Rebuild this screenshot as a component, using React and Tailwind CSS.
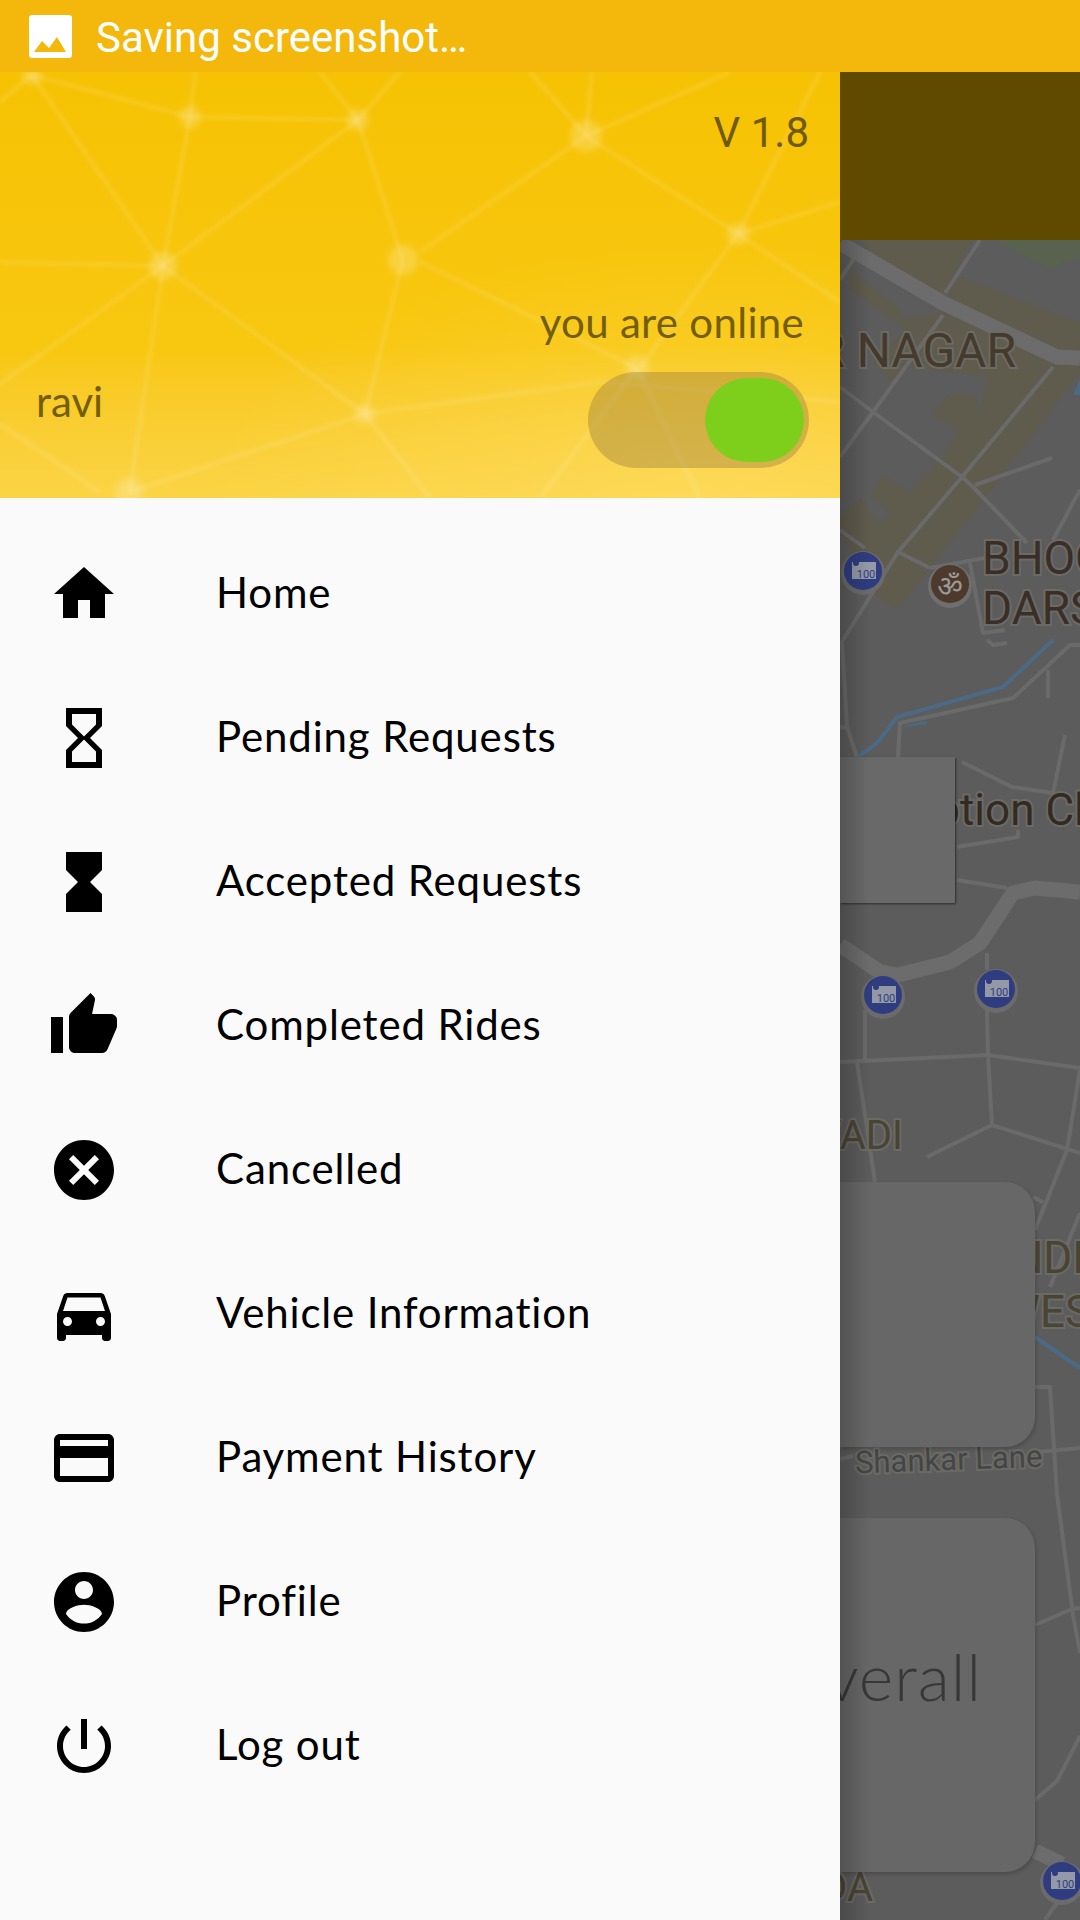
import React from "react";

const menuItems = [
  { label: "Home", d: "M10 20v-6h4v6h5v-8h3L12 3 2 12h3v8z" },
  { label: "Pending Requests", d: "M6 2v6h.01L6 8.01 10 12l-4 4 .01.01H6V22h12v-5.99h-.01L18 16l-4-4 4-3.99-.01-.01H18V2H6zm10 14.5V20H8v-3.5l4-4 4 4zm-4-5l-4-4V4h8v3.5l-4 4z" },
  { label: "Accepted Requests", d: "M6 2v6h.01L6 8.01 10 12l-4 4 .01.01H6V22h12v-5.99h-.01L18 16l-4-4 4-3.99-.01-.01H18V2H6z" },
  { label: "Completed Rides", d: "M1 21h4V9H1v12zm22-11c0-1.1-.9-2-2-2h-6.31l.95-4.57.03-.32c0-.41-.17-.79-.44-1.06L14.17 1 7.59 7.59C7.22 7.95 7 8.45 7 9v10c0 1.1.9 2 2 2h9c.83 0 1.54-.5 1.84-1.22l3.02-7.05c.09-.23.14-.47.14-.73v-2z" },
  { label: "Cancelled", d: "M12 2C6.47 2 2 6.47 2 12s4.47 10 10 10 10-4.47 10-10S17.53 2 12 2zm5 13.59L15.59 17 12 13.41 8.41 17 7 15.59 10.59 12 7 8.41 8.41 7 12 10.59 15.59 7 17 8.41 13.41 12 17 15.59z" },
  { label: "Vehicle Information", d: "M18.92 6.01C18.72 5.42 18.16 5 17.5 5h-11c-.66 0-1.21.42-1.42 1.01L3 12v8c0 .55.45 1 1 1h1c.55 0 1-.45 1-1v-1h12v1c0 .55.45 1 1 1h1c.55 0 1-.45 1-1v-8l-2.08-5.99zM6.5 16c-.83 0-1.5-.67-1.5-1.5S5.67 13 6.5 13s1.5.67 1.5 1.5S7.33 16 6.5 16zm11 0c-.83 0-1.5-.67-1.5-1.5s.67-1.5 1.5-1.5 1.5.67 1.5 1.5-.67 1.5-1.5 1.5zM5 11l1.5-4.5h11L19 11H5z" },
  { label: "Payment History", d: "M20 4H4c-1.11 0-1.99.89-1.99 2L2 18c0 1.11.89 2 2 2h16c1.11 0 2-.89 2-2V6c0-1.11-.89-2-2-2zm0 14H4v-6h16v6zm0-10H4V6h16v2z" },
  { label: "Profile", d: "M12 2C6.48 2 2 6.48 2 12s4.48 10 10 10 10-4.48 10-10S17.52 2 12 2zm0 3c1.66 0 3 1.34 3 3s-1.34 3-3 3-3-1.34-3-3 1.34-3 3-3zm0 14.2c-2.5 0-4.71-1.28-6-3.22.03-1.99 4-3.08 6-3.08 1.99 0 5.97 1.09 6 3.08-1.29 1.94-3.5 3.22-6 3.22z" },
  { label: "Log out", d: "M13 3h-2v10h2V3zm4.83 2.17l-1.42 1.42C17.99 7.86 19 9.81 19 12c0 3.87-3.13 7-7 7s-7-3.13-7-7c0-2.19 1.01-4.14 2.58-5.42L6.17 5.17C4.23 6.82 3 9.26 3 12c0 4.97 4.03 9 9 9s9-4.03 9-9c0-2.74-1.23-5.18-3.17-6.83z" },
];

// header pattern, x / y inside the 840x426 header
const nodes = [
  [32, 3, 10], [190, 45, 11], [358, 48, 11], [586, 64, 16], [738, 162, 11],
  [163, 194, 14], [403, 188, 15], [365, 342, 10], [129, 420, 14], [637, 296, 12],
];
const edges = [
  [32, 3, 163, 194], [32, 3, 0, 30], [32, 3, 190, 45], [190, 45, 195, 0], [190, 45, 358, 48], [190, 45, 163, 194],
  [358, 48, 163, 194], [358, 48, 320, 0], [358, 48, 400, 0], [358, 48, 403, 188], [163, 194, 0, 190], [163, 194, 0, 312],
  [163, 194, 365, 342], [163, 194, 130, 420], [403, 188, 365, 342], [365, 342, 129, 420], [0, 352, 100, 420],
  [586, 64, 530, 0], [586, 64, 592, 0], [586, 64, 730, 0], [586, 64, 420, 180], [586, 64, 738, 162],
  [738, 162, 840, 130], [738, 162, 840, 230], [738, 162, 820, 0], [738, 162, 640, 296], [420, 190, 637, 296],
  [637, 296, 540, 426], [637, 296, 700, 426], [365, 342, 430, 426], [365, 342, 600, 310], [600, 310, 840, 330],
];

const thinRoads = [
  "M980 240 L945 293", "M943 315 L873 412 L840 457", "M840 387 L873 412 L962 477 L973 487 L1027 543",
  "M1053 367 L962 477 L898 552 L843 640", "M975 485 L1052 458", "M898 552 L930 568", "M930 568 L985 558",
  "M1080 490 L1053 540", "M840 530 L865 548", "M855 257 L840 280", "M970 563 L983 633 L1005 630",
  "M1080 645 L1070 645 L1013 698 L900 723 L898 757", "M1048 670 L1048 698", "M987 640 L993 645 L1007 643",
  "M842 640 L847 727 L857 757", "M840 727 L847 728", "M962 762 L1012 787 L1053 793 L1065 735",
  "M957 847 L1018 837 L1018 830", "M957 880 L1007 888", "M987 953 L987 970", "M987 1010 L988 1055", "M865 1010 L865 1062",
  "M840 1062 L988 1055 L1080 1068", "M988 1055 L992 1125", "M857 1062 L875 1182", "M992 1125 L927 1157",
  "M992 1125 L1080 1153", "M1080 1070 L1067 1150 L1035 1230", "M1080 1213 L1050 1287", "M1033 1197 L1043 1202",
  "M1035 1387 L1050 1387 L1057 1494 L1073 1615 L1080 1653", "M1038 1452 L1080 1448", "M840 1459 L853 1456",
  "M1035 1625 L1072 1609 L1080 1608", "M1035 1800 L1057 1781 L1080 1736", "M1080 1870 L1045 1920",
];

function SignBadge({ x, y }) {
  return (
    <g>
      <circle cx={x} cy={y + 2} r="22" fill="#6b6b6b" />
      <circle cx={x} cy={y} r="19" fill="#2f3d80" />
      <rect x={x - 11} y={y - 9} width="24" height="17" fill="#9499a8" />
      <circle cx={x - 7} cy={y - 8} r="3" fill="#2f3d80" />
      <text x={x + 3} y={y + 7} textAnchor="middle" fontSize="11" fill="#2f3d80" fontFamily="Roboto, sans-serif">100</text>
    </g>
  );
}

function MapLabel({ x, y, size = 44, anchor = "start", fill = "#3f3a2f", children }) {
  return (
    <text
      x={x}
      y={y}
      fontSize={size}
      textAnchor={anchor}
      fill={fill}
      stroke="#6a6a66"
      strokeWidth="4"
      paintOrder="stroke"
      fontFamily="Roboto, sans-serif"
    >
      {children}
    </text>
  );
}

function MapDrawing() {
  return (
    <svg className="absolute inset-0 w-full h-full" viewBox="840 240 240 1680">
      <rect x="840" y="240" width="240" height="1680" fill="#5c5c5c" />
      <path d="M997 240 H1080 V257 L1050 268 L1017 253 Z" fill="#59614f" />
      <g fill="#5f5b4d">
        <path d="M867 240 H973 L943 295 L860 262 Z" />
        <path d="M960 277 L1080 323 V360 L1000 340 L945 300 Z" />
        <path d="M850 268 L900 310 L899 319 L945 312 L1053 353 L1080 358 V373 L997 483 L897 610 L877 597 L840 533 V517 L860 498 L880 525 L890 513 L870 497 L883 475 L910 492 L943 457 L958 430 L932 413 L950 393 L975 395 L982 410 L985 385 L987 377 L910 367 L890 380 L873 363 L905 330 L880 310 L850 290 Z" />
      </g>
      <path d="M1073 395 L1080 380 V395 Z" fill="#4b6a85" />
      <g fill="none" stroke="#6a6a6a" strokeWidth="4" strokeLinejoin="round">
        {thinRoads.map((d) => (
          <path key={d} d={d} />
        ))}
      </g>
      <g fill="none" stroke="#6c6c6c" strokeWidth="15" strokeLinejoin="round">
        <path d="M840 243 L943 303 L1057 357 L1080 358" />
        <path d="M840 945 L880 972 L898 975 L950 962 L980 943 L1013 893 L1035 888 L1080 892" />
        <path d="M1035 1851 L1062 1864" />
      </g>
      <g fill="none" stroke="#4b6a85" strokeWidth="4">
        <path d="M1053 640 L1003 687 L897 717 L877 743 L858 757" />
        <path d="M1035 1337 L1080 1368" />
      </g>
      <path d="M903 726 L925 721 L928 724 L906 727 Z" fill="#4b6a85" />
      <SignBadge x={863} y={571} />
      <SignBadge x={883} y={995} />
      <SignBadge x={996} y={989} />
      <SignBadge x={1062} y={1881} />
      <circle cx="950" cy="586" r="22" fill="#6f6f6f" />
      <circle cx="950" cy="584" r="19" fill="#4e3a2c" />
      <text x="950" y="596" textAnchor="middle" fontSize="28" fill="#9a9a98" fontFamily="'Noto Sans', sans-serif">ॐ</text>
      <MapLabel x={1016} y={367} size={48} anchor="end" fill="#463a2b">R NAGAR</MapLabel>
      <MapLabel x={982} y={574} size={46} fill="#3a2e26">BHOG</MapLabel>
      <MapLabel x={982} y={624} size={46} fill="#3a2e26">DARS</MapLabel>
      <MapLabel x={905} y={825} size={44} fill="#342a22">Option Cl</MapLabel>
      <MapLabel x={903} y={1149} size={40} anchor="end" fill="#4a4434">VADI</MapLabel>
      <MapLabel x={1000} y={1273} size={44} fill="#4a4434">INDI</MapLabel>
      <MapLabel x={1001} y={1327} size={44} fill="#4a4434">WES</MapLabel>
      <g transform="rotate(-2 950 1460)">
        <MapLabel x={855} y={1470} size={31} fill="#454545">Shankar Lane</MapLabel>
      </g>
      <MapLabel x={873} y={1901} size={40} anchor="end" fill="#4a4434">DA</MapLabel>
    </svg>
  );
}

function App() {
  return (
    <div className="w-[1080px] h-[1920px] flex flex-col overflow-hidden">
      <div className="h-[72px] bg-[#f4b80d] flex items-center pl-[29px] gap-[24px]">
        <svg className="w-[43px] h-[43px]" viewBox="0 0 43 43">
          <rect width="43" height="43" rx="3" fill="#fff" />
          <path d="M5 37 L13 26 L20 33 L28 22 L37 37 Z" fill="#f4b80d" />
        </svg>
        <span className="text-white text-[42px] font-['Roboto',sans-serif] leading-none mt-[3px]">Saving screenshot…</span>
      </div>

      <div className="flex-1 flex">
        <aside className="w-[840px] flex flex-col bg-[#fafafa] relative z-10">
          <div className="relative h-[426px] bg-gradient-to-b from-[#f6c203] via-[#f8c710] via-65% to-[#fbd445] overflow-hidden">
            <svg className="absolute inset-0 w-full h-full" viewBox="0 0 840 426">
              <defs>
                <filter id="soft"><feGaussianBlur stdDeviation="3" /></filter>
                <filter id="softLine"><feGaussianBlur stdDeviation="1.5" /></filter>
                <radialGradient id="corner" cx="0.85" cy="1" r="0.6">
                  <stop offset="0" stopColor="#ffe070" stopOpacity="0.45" />
                  <stop offset="1" stopColor="#ffe070" stopOpacity="0" />
                </radialGradient>
              </defs>
              <rect width="840" height="426" fill="url(#corner)" />
              <g stroke="#fff" strokeOpacity="0.09" strokeWidth="5" filter="url(#softLine)">
                {edges.map((e, i) => (
                  <line key={i} x1={e[0]} y1={e[1]} x2={e[2]} y2={e[3]} />
                ))}
              </g>
              <g fill="#fff" fillOpacity="0.2" filter="url(#soft)">
                {nodes.map((n, i) => (
                  <circle key={i} cx={n[0]} cy={n[1]} r={n[2]} />
                ))}
              </g>
            </svg>
            <div className="relative h-full flex flex-col justify-between pl-[36px] pr-[31px] pb-[30px] pt-[37px]">
              <p className="text-right text-[42px] leading-[48px] text-[#705a00] font-['Roboto',sans-serif]">V 1.8</p>
              <div className="flex items-end justify-between">
                <span className="text-[#735e05] text-[42px] leading-[48px] mb-[43px] font-['Lato',sans-serif]">ravi</span>
                <div className="flex flex-col items-end gap-[26px]">
                  <span className="text-[#735e05] text-[42px] leading-[48px] pr-[5px] tracking-[0.3px] font-['Lato',sans-serif]">you are online</span>
                  <div className="w-[221px] h-[96px] rounded-[48px] bg-[#8a7040]/35 flex items-center justify-end pr-[5px]">
                    <div className="w-[99px] h-[84px] rounded-[42px] bg-[#7dcf1b]" />
                  </div>
                </div>
              </div>
            </div>
          </div>

          <nav className="pt-[24px]">
            {menuItems.map((item) => (
              <div key={item.label} className="h-[144px] flex items-center pl-[48px]">
                <svg className="w-[72px] h-[72px]" viewBox="0 0 24 24" fill="#000">
                  <path d={item.d} />
                </svg>
                <span className="ml-[96px] pb-[3px] text-[42px] tracking-[0.85px] text-black font-['Lato',sans-serif]">{item.label}</span>
              </div>
            ))}
          </nav>
        </aside>

        <div className="flex-1 flex flex-col">
          <div className="h-[168px] bg-[#604a00]" />
          <div className="relative flex-1 overflow-hidden">
            <MapDrawing />
            <div className="absolute left-0 top-[517px] w-[115px] h-[146px] bg-[#696969] shadow-[1px_1px_2px_rgba(0,0,0,0.5)]" />
            <div className="absolute left-0 top-[942px] w-[195px] h-[265px] bg-[#676767] rounded-r-[30px] shadow-[1px_2px_4px_rgba(0,0,0,0.2)]" />
            <div className="absolute left-0 top-[1278px] w-[195px] h-[354px] bg-[#676767] rounded-r-[30px] shadow-[1px_2px_4px_rgba(0,0,0,0.2)] overflow-hidden">
              <span className="absolute right-[53px] top-[125px] text-[66px] tracking-[1px] leading-none text-[#383838] font-['Lato',sans-serif] font-light">Overall</span>
            </div>
            <div className="absolute inset-y-0 left-0 w-[30px] bg-gradient-to-r from-black/20 to-transparent" />
          </div>
        </div>
      </div>
    </div>
  );
}

export default App;
